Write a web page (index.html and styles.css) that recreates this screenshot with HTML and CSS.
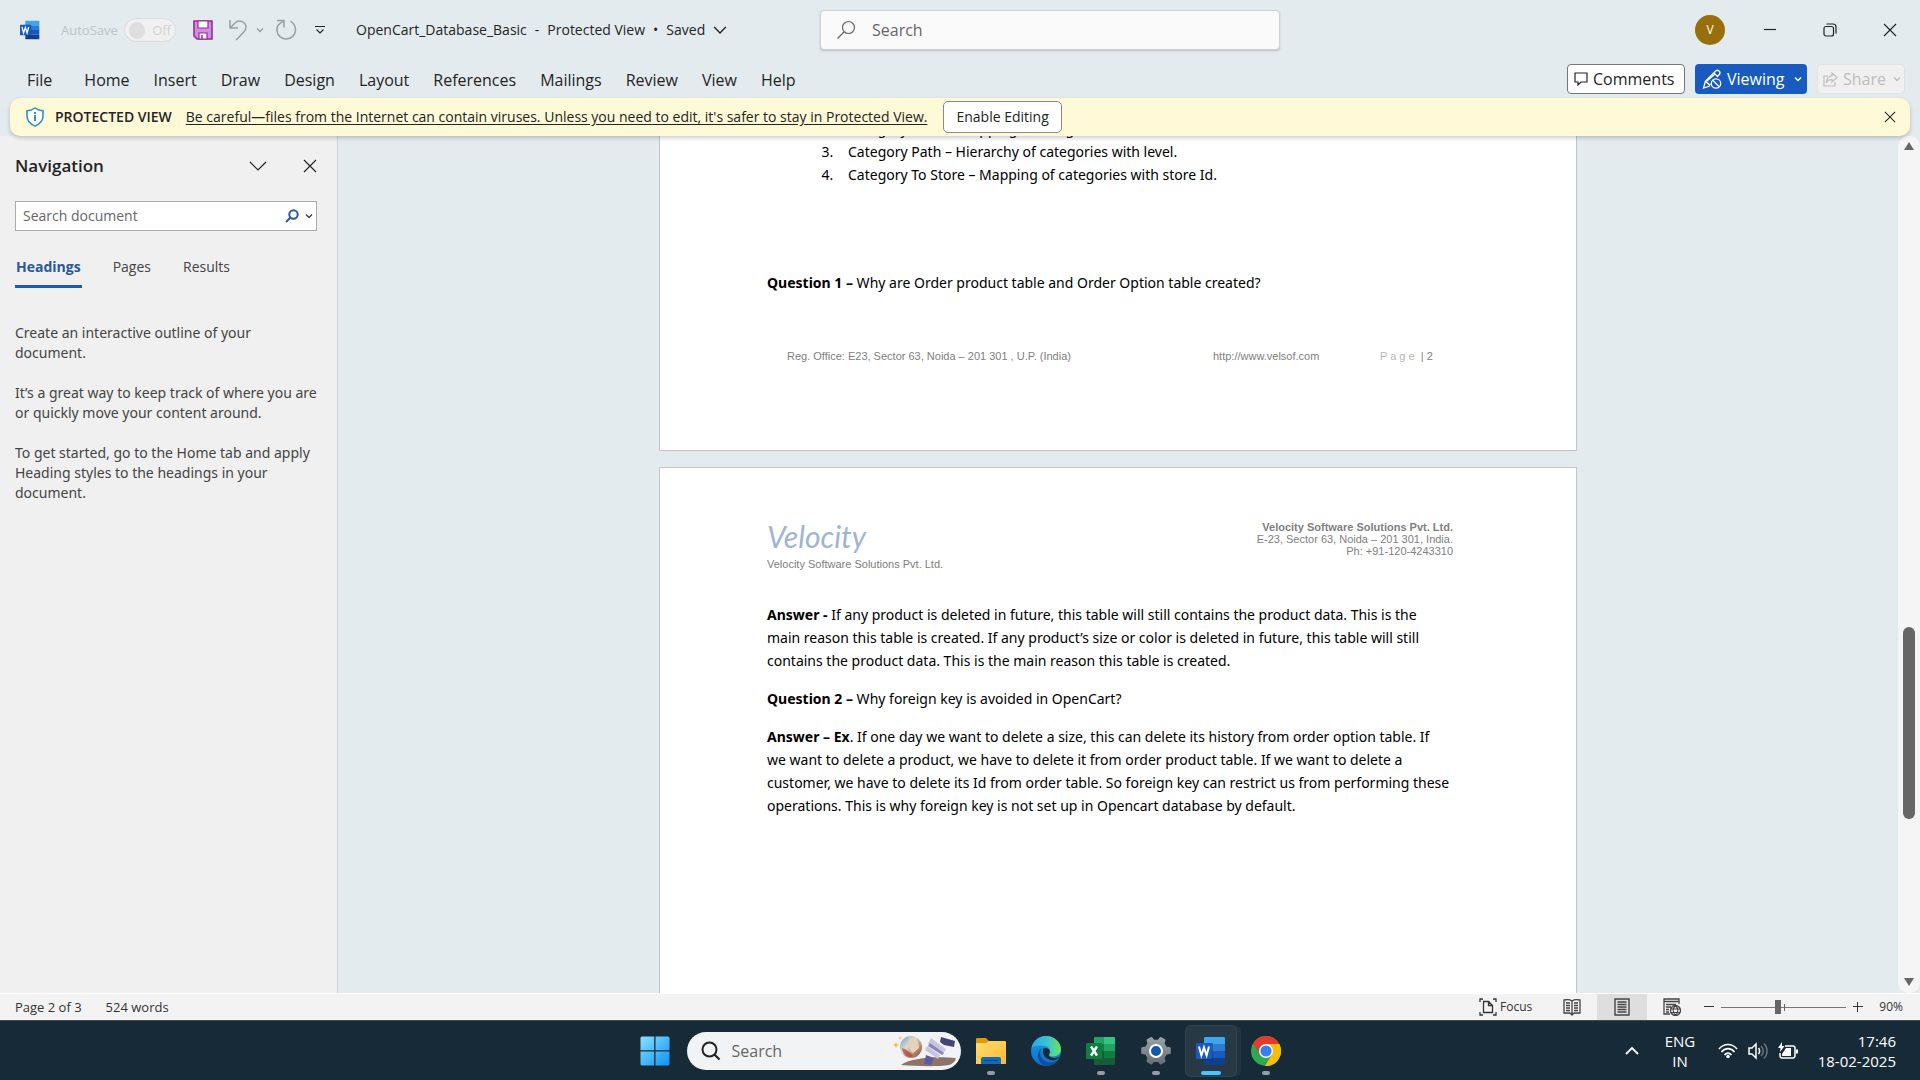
FILE: index.html
```html
<!DOCTYPE html>
<html lang="en">
<head>
<meta charset="utf-8">
<title>OpenCart_Database_Basic - Protected View</title>
<link rel="stylesheet" href="styles.css">
</head>
<body>
<svg class="defs" width="0" height="0" aria-hidden="true">
  <defs>
    <linearGradient id="win" x1="0" y1="0" x2="1" y2="1"><stop offset="0" stop-color="#8be0ff"/><stop offset="1" stop-color="#0a93f5"/></linearGradient>
    <linearGradient id="fold" x1="0" y1="0" x2="1" y2="1"><stop offset="0" stop-color="#ffdd76"/><stop offset="1" stop-color="#fdb92d"/></linearGradient>
    <linearGradient id="edgeTop" x1="0" y1="0" x2="1" y2="0"><stop offset="0" stop-color="#2aa7e6"/><stop offset=".5" stop-color="#35c3d8"/><stop offset="1" stop-color="#6be35a"/></linearGradient>
    <linearGradient id="edgeLeft" x1="0" y1="0" x2="0" y2="1"><stop offset="0" stop-color="#1b9fe4"/><stop offset="1" stop-color="#1069c8"/></linearGradient>
    <linearGradient id="ball" x1="0" y1="0" x2="1" y2="1"><stop offset="0" stop-color="#6f97b4"/><stop offset=".4" stop-color="#d9dcd5"/><stop offset=".7" stop-color="#c08766"/><stop offset="1" stop-color="#5a4a4a"/></linearGradient>
    <linearGradient id="gear" x1="0" y1="0" x2="0" y2="1"><stop offset="0" stop-color="#9aa0a8"/><stop offset="1" stop-color="#696f77"/></linearGradient>
    <symbol id="word" viewBox="0 0 30 30">
      <path fill="#41a5ee" d="M9 1h19a1 1 0 0 1 1 1v6H8V2a1 1 0 0 1 1-1z"/><path fill="#2b7cd3" d="M8 8h21v7H8z"/><path fill="#185abd" d="M8 15h21v7H8z"/><path fill="#103f91" d="M8 22h21v6a1 1 0 0 1-1 1H9a1 1 0 0 1-1-1z"/>
      <path fill="#0b2f6b" opacity=".4" d="M8 7h8a1 1 0 0 1 1 1v15a1 1 0 0 1-1 1H8z"/>
      <rect y="7" width="16" height="16" rx="1" fill="#185abd"/><path fill="none" stroke="#fff" stroke-width="2" d="M3 10.500l2.400 9L8 11.500l2.600 8 2.400-9"/>
    </symbol>
    <symbol id="excel" viewBox="0 0 30 30">
      <path fill="#21a366" d="M8 2a1 1 0 0 1 1-1h9v7H8z"/><path fill="#33c481" d="M18 1h10a1 1 0 0 1 1 1v6H18z"/><path fill="#107c41" d="M8 8h10v7H8zM18 15h11v7H18z"/><path fill="#21a366" d="M18 8h11v7H18z"/><path fill="#185c37" d="M8 15h10v7h11v6a1 1 0 0 1-1 1H9a1 1 0 0 1-1-1z"/>
      <rect y="7" width="16" height="16" rx="1" fill="#107c41"/><path fill="none" stroke="#fff" stroke-width="2.400" d="M5 10.500l6 9M11 10.500l-6 9"/>
    </symbol>
    <symbol id="chev" viewBox="0 0 12 12"><path fill="none" stroke="currentColor" stroke-width="1.200" d="M1 3.500l5 5 5-5"/></symbol>
    <symbol id="chevBold" viewBox="0 0 8 8"><path fill="none" stroke="currentColor" stroke-width="1.400" d="M1 2.500l3 3 3-3"/></symbol>
    <symbol id="close" viewBox="0 0 14 14"><path fill="none" stroke="currentColor" stroke-width="1.200" d="M1 1l12 12M13 1L1 13"/></symbol>
    <symbol id="lens" viewBox="0 0 20 20"><circle cx="12.500" cy="7.500" r="6" fill="none" stroke="currentColor" stroke-width="1.200"/><path fill="none" stroke="currentColor" stroke-width="1.200" d="M8 12l-6.500 6.500"/></symbol>
  </defs>
</svg>
<div class="app">
  <header class="titlebar">
    <div class="quick">
      <svg class="i22 word-logo"><use href="#word"/></svg>
      <span class="autosave">AutoSave</span>
      <button class="toggle" disabled><span class="knob"></span>Off</button>
      <button class="icon save" aria-label="Save"><svg width="20" height="20" viewBox="0 0 20 20"><path fill="#d78bdd" stroke="#8f2f9c" stroke-width="1.600" d="M1 1h18v18H4l-3-3z"/><path fill="#fff" stroke="#8f2f9c" stroke-width="1.200" d="M5 1h10v7H5zM6 13h8v6H6z"/><path stroke="#8f2f9c" stroke-width="1.500" d="M9 15v4"/></svg></button>
      <button class="icon muted undo" aria-label="Undo"><svg width="20" height="22" viewBox="0 0 20 22"><path fill="none" stroke="currentColor" stroke-width="1.500" d="M2 1v8h8M2 9l5-5c4-4 11-1 11 4 0 3-1 4-3 6l-7 7"/></svg></button>
      <button class="icon muted" aria-label="Undo options"><svg width="8" height="8"><use href="#chevBold"/></svg></button>
      <button class="icon muted redo" aria-label="Repeat"><svg width="22" height="22" viewBox="0 0 22 22"><path fill="none" stroke="currentColor" stroke-width="1.500" d="M2 1.500h7v7M9 2c-5 2-7.500 5.500-7 10 .5 5 5 8 9.500 8s9-4 9-9c0-4-2-7-5-9"/></svg></button>
      <button class="icon more" aria-label="Customize toolbar"><svg width="10" height="10" viewBox="0 0 10 10"><path fill="none" stroke="currentColor" stroke-width="1.200" d="M0 1.500h10M1.500 4.500L5 8l3.500-3.500"/></svg></button>
      <button class="doc-name"><span>OpenCart_Database_Basic</span><span>-</span><span>Protected View</span><span>•</span><span>Saved</span><svg width="14" height="14"><use href="#chev"/></svg></button>
    </div>
    <label class="search"><svg width="20" height="20"><use href="#lens"/></svg><input type="text" placeholder="Search" aria-label="Search"></label>
    <div class="window">
      <button class="avatar" aria-label="Account">V</button>
      <button class="icon" aria-label="Minimize"><svg width="14" height="14" viewBox="0 0 14 14"><path stroke="currentColor" stroke-width="1.200" d="M1 6.500h12"/></svg></button>
      <button class="icon" aria-label="Restore"><svg width="14" height="14" viewBox="0 0 14 14"><rect x="1" y="3.500" width="9.500" height="9.500" rx="2" fill="none" stroke="currentColor" stroke-width="1.200"/><path fill="none" stroke="currentColor" stroke-width="1.200" d="M3.500 1H10q3 0 3 3v6.500"/></svg></button>
      <button class="icon" aria-label="Close"><svg width="14" height="14"><use href="#close"/></svg></button>
    </div>
  </header>

  <div class="ribbon">
    <nav class="tabs">
      <a href="#" class="file">File</a><a href="#">Home</a><a href="#">Insert</a><a href="#">Draw</a><a href="#">Design</a><a href="#">Layout</a><a href="#">References</a><a href="#">Mailings</a><a href="#">Review</a><a href="#">View</a><a href="#">Help</a>
    </nav>
    <div class="actions">
      <button class="btn comments"><svg width="14" height="14" viewBox="0 0 14 14"><path fill="none" stroke="currentColor" stroke-width="1.200" d="M1 1h12v9H7l-3 3v-3H1z"/></svg>Comments</button>
      <button class="btn viewing"><svg width="20" height="20" viewBox="0 0 20 20"><g fill="none" stroke="currentColor" stroke-width="1.300"><path d="M8 17l-6.500 2L3.500 12 14 1.800c2-1.500 5 1 3.500 3.500L15 8M3.500 12l4 4 1-1M12 4l4 4M5 12l8-7"/><circle cx="14" cy="14.500" r="4.700"/><path d="M10.500 11l7 7"/></g></svg>Viewing<svg class="small" width="8" height="8"><use href="#chevBold"/></svg></button>
      <button class="btn share" disabled><svg width="15" height="15" viewBox="0 0 15 15"><path fill="none" stroke="currentColor" stroke-width="1.200" d="M5 4H1v10h11v-4M9 1l5 4.500L9 10V7.500C6 7.500 4 9 3.500 11 3.500 6.500 6 4 9 3.800z"/></svg>Share<svg class="small" width="8" height="8"><use href="#chevBold"/></svg></button>
    </div>
  </div>

  <div class="notice">
    <svg width="18" height="20" viewBox="0 0 18 20"><path fill="#fff" stroke="#2f8fd0" stroke-width="1.600" d="M9 1c2.500 2 5 2.600 8 2.700V9c0 5-3 8-8 10-5-2-8-5-8-10V3.700C4 3.600 6.500 3 9 1z"/><path fill="#2f8fd0" d="M8 5h2v2H8zM8 8h2v6H8z"/></svg>
    <strong>PROTECTED VIEW</strong>
    <a href="#">Be careful—files from the Internet can contain viruses. Unless you need to edit, it's safer to stay in Protected View.</a>
    <button class="enable">Enable Editing</button>
    <button class="icon dismiss" aria-label="Dismiss"><svg width="12" height="12"><use href="#close"/></svg></button>
  </div>

  <main class="workspace">
    <aside class="nav">
      <div class="nav-head"><h2>Navigation</h2>
        <button class="icon" aria-label="Pane options"><svg width="18" height="10" viewBox="0 0 18 10"><path fill="none" stroke="currentColor" stroke-width="1.200" d="M1 1l8 8 8-8"/></svg></button>
        <button class="icon" aria-label="Close pane"><svg width="14" height="14"><use href="#close"/></svg></button></div>
      <label class="nav-search"><input type="text" placeholder="Search document" aria-label="Search document"><svg class="find" width="14" height="14" viewBox="0 0 14 14"><circle cx="8.500" cy="5.500" r="4.200" fill="none" stroke="currentColor" stroke-width="2"/><path stroke="currentColor" stroke-width="2" d="M5.500 8.500L1 13"/></svg><svg width="8" height="8"><use href="#chevBold"/></svg></label>
      <div class="nav-tabs"><button class="on">Headings</button><button>Pages</button><button>Results</button></div>
      <div class="nav-help">
        <p>Create an interactive outline of your<br>document.</p>
        <p>It’s a great way to keep track of where you are<br>or quickly move your content around.</p>
        <p>To get started, go to the Home tab and apply<br>Heading styles to the headings in your<br>document.</p>
      </div>
    </aside>

    <div class="canvas">
      <article class="page first">
        <ol start="2">
          <li>Category Filter – Mapping of categories with filter.</li>
          <li>Category Path – Hierarchy of categories with level.</li>
          <li>Category To Store – Mapping of categories with store Id.</li>
        </ol>
        <p><b>Question 1 –</b> Why are Order product table and Order Option table created?</p>
        <footer><span class="office">Reg. Office: E23, Sector 63, Noida – 201 301 , U.P. (India)</span><span>http://www.velsof.com</span><span><span class="pale">P a g e</span>&nbsp; | 2</span></footer>
      </article>
      <article class="page second">
        <header>
          <div><div class="brand">Velocity</div><div>Velocity Software Solutions Pvt. Ltd.</div></div>
          <address><b>Velocity Software Solutions Pvt. Ltd.</b><br>E-23, Sector 63, Noida – 201 301, India.<br>Ph: +91-120-4243310</address>
        </header>
        <p><b>Answer -</b> If any product is deleted in future, this table will still contains the product data. This is the<br>main reason this table is created. If any product’s size or color is deleted in future, this table will still<br>contains the product data. This is the main reason this table is created.</p>
        <p><b>Question 2 –</b> Why foreign key is avoided in OpenCart?</p>
        <p><b>Answer – Ex</b>. If one day we want to delete a size, this can delete its history from order option table. If<br>we want to delete a product, we have to delete it from order product table. If we want to delete a<br>customer, we have to delete its Id from order table. So foreign key can restrict us from performing these<br>operations. This is why foreign key is not set up in Opencart database by default.</p>
      </article>
    </div>
    <div class="scroll"><svg width="12" height="10" viewBox="0 0 12 10"><path fill="#666" d="M6 1l5 8H1z"/></svg><div class="rail"><div class="thumb"></div></div><svg width="12" height="10" viewBox="0 0 12 10"><path fill="#666" d="M6 9l5-8H1z"/></svg></div>
  </main>

  <footer class="status">
    <span>Page 2 of 3</span><span class="words">524 words</span>
    <button class="focus"><svg width="18" height="18" viewBox="0 0 18 18"><g fill="none" stroke="#333" stroke-width="1.300"><path d="M1 4V1h3M14 1h3v3M1 14v3h3M14 17h3v-3"/><path d="M4.500 3.500h5l4 4v7h-9zM9.500 3.500v4h4"/></g></svg>Focus</button>
    <button class="mode" aria-label="Read mode"><svg width="18" height="18" viewBox="0 0 18 18"><path fill="none" stroke="#444" stroke-width="1.300" d="M9 3C7 1.500 4 1.500 1 2v13h6l2 2 2-2h6V2c-3-.5-6-.5-8 1zM9 3v13M3 5h4M3 7.500h4M3 10h4M3 12.500h4M11 5h4M11 7.500h4M11 10h4M11 12.500h4"/></svg></button>
    <button class="mode on" aria-label="Print layout"><svg width="16" height="18" viewBox="0 0 16 18"><path fill="none" stroke="#444" stroke-width="1.400" d="M1 1h14v16H1zM3.500 4h9M3.500 6.500h9M3.500 9h9M3.500 11.500h9M3.500 14h9"/></svg></button>
    <button class="mode" aria-label="Web layout"><svg width="18" height="18" viewBox="0 0 18 18"><path fill="none" stroke="#444" stroke-width="1.300" d="M7 16H1V1h15v5M1 3.500h15M3 6.500h10M3 9h5M3 11.500h3M3 14h3"/><circle cx="12.500" cy="12.500" r="5" fill="#f3f3f3" stroke="#444" stroke-width="1.300"/><path fill="none" stroke="#444" stroke-width="1.200" d="M12.500 7.500c-3 3-3 7 0 10 3-3 3-7 0-10zM8 11h9M8 14.500h9"/></svg></button>
    <button class="icon step" aria-label="Zoom out"><svg width="10" height="10" viewBox="0 0 10 10"><path stroke="currentColor" d="M0 4.500h10"/></svg></button>
    <span class="zoom"><input type="range" min="10" max="500" value="230" aria-label="Zoom"></span>
    <button class="icon step" aria-label="Zoom in"><svg width="10" height="10" viewBox="0 0 10 10"><path stroke="currentColor" d="M0 4.500h10M4.500 0v10"/></svg></button>
    <button class="percent">90%</button>
  </footer>
</div>

<div class="taskbar">
  <div class="dock">
    <button class="app-btn start" aria-label="Start"><svg width="30" height="30" viewBox="0 0 30 30"><path fill="url(#win)" d="M2 .5h12.200v13.700H.5V2A1.500 1.500 0 0 1 2 .5zM15.500.5H28A1.500 1.500 0 0 1 29.500 2v12.200h-14zM.5 15.500h13.700v14H2A1.500 1.500 0 0 1 .5 28zM15.500 15.500h14V28a1.500 1.500 0 0 1-1.500 1.500H15.500z"/></svg></button>
    <label class="task-search"><svg width="20" height="20" viewBox="0 0 20 20"><circle cx="8.500" cy="8.500" r="7" fill="none" stroke="#222" stroke-width="2"/><path stroke="#222" stroke-width="2.200" d="M13.500 13.500L18.500 18.500"/></svg><input type="text" placeholder="Search" aria-label="Search Windows">
      <svg width="64" height="32" viewBox="0 0 64 32"><path fill="#8c7468" d="M8 30c8-7 36-9 54-7 2 0 0 5-6 7-12 2-34 1-48 0z"/><circle cx="18" cy="12" r="11" fill="url(#ball)"/><path fill="#e3d3bd" d="M17 3c6-1 9 4 9 10l-6 5c-4-2-2-6-5-8z"/><path fill="#a8402c" d="M9 13c4 1 8 4 11 8-5 3-10-1-11-8z" opacity=".7"/><path fill="#c9c4e4" d="M38 3l15 11-3 5-15-10zM34 11l13 9-2 4-13-9z"/><path fill="#8d86b5" d="M37 8l14 10-2 2-14-9z"/><path fill="#454572" d="M48 2l14 4-1 6-10-2-4-3z"/><path fill="#5d5ba0" d="M33 20l8 3-3 7-7-1z"/><path fill="#f3c13a" d="M3 7l1 2 2 1-2 1-1 2-1-2-2-1 2-1zM7 1l.6 1.500L9 3l-1.400.6L7 5l-.6-1.400L5 3l1.400-.5z"/></svg></label>
    <button class="app-btn run" aria-label="File Explorer"><svg width="30" height="30" viewBox="0 0 30 30"><path fill="#dd9a08" d="M0 3a1 1 0 0 1 1-1h9l3 3h16v6H0z"/><path fill="url(#fold)" d="M0 7h10l3-2h16a1 1 0 0 1 1 1v22H0z"/><path fill="#0f6cbd" d="M5 28v-5a2 2 0 0 1 2-2h16a2 2 0 0 1 2 2v5z"/><path stroke="#0a4a8a" stroke-width="1.200" d="M8 24.500h14"/></svg></button>
    <button class="app-btn" aria-label="Edge"><svg width="30" height="30" viewBox="0 0 30 30"><circle cx="15" cy="15" r="15" fill="url(#edgeLeft)"/><path fill="url(#edgeTop)" d="M.5 11.500C2 5 8 0 15 0c9 0 15 7 15 13 0 5-4 7.500-8 7.500-4 0-5-1.500-4-3 2-3 0-7-4-7.500C8 8.500 3 10 .5 11.500z"/><path fill="#0d4f9e" d="M11 12c-4 5-1 12 5 14 4 1 8 0 11-2-3 4-7 6-12 6-5-1-9-7-8-12 .5-3 2-5 4-6z"/><path fill="#172a38" d="M12 13c2-2 6-1 7 2 .5 2-1 3-1 4 0 2 3 3 6 3 2 0 4-1 5-2-2 4-6 5-9 4-5-1-9-5-8-11z"/></svg></button>
    <button class="app-btn run" aria-label="Excel"><svg width="30" height="30"><use href="#excel"/></svg></button>
    <button class="app-btn run" aria-label="Settings"><svg width="30" height="30" viewBox="0 0 30 30"><path fill="url(#gear)" stroke="url(#gear)" stroke-width="2" stroke-linejoin="round" d="M10.500 2l2 2.700h5l2-2.700 4 2.200-1 3.300 2.500 4 3.800.8v4.700l-3.800.8-2.500 4 1 3.500-4 2.200-2-2.500h-5l-2 2.500-4-2.200 1-3.500-2.500-4-3.800-.8v-4.700l3.800-.8 2.500-4-1-3.300z"/><circle cx="15" cy="15" r="6" fill="#0f59a8" stroke="#fff" stroke-width="2"/></svg></button>
    <button class="app-btn run current" aria-label="Word"><svg width="30" height="30"><use href="#word"/></svg></button>
    <button class="app-btn run" aria-label="Chrome"><svg width="30" height="30" viewBox="0 0 30 30"><circle cx="15" cy="15" r="15" fill="#2da94f"/><path fill="#fbbc05" d="M15 8h13.300A15 15 0 0 1 14 30l7-11.500z"/><path fill="#e33b2e" d="M15 0a15 15 0 0 1 13.300 8H15a7 7 0 0 0-6.500 10L2 7.500A15 15 0 0 1 15 0z"/><circle cx="15" cy="15" r="7" fill="#fff"/><circle cx="15" cy="15" r="5.600" fill="#3b7ded"/></svg></button>
  </div>
  <div class="tray">
    <button class="icon" aria-label="Hidden icons"><svg width="14" height="10" viewBox="0 0 14 10"><path fill="none" stroke="currentColor" stroke-width="1.800" d="M1 8l6-6 6 6"/></svg></button>
    <button class="lang">ENG<br>IN</button>
    <button class="icon net" aria-label="Network, volume and battery">
      <svg width="20" height="16" viewBox="0 0 20 16"><g fill="none" stroke="currentColor" stroke-width="1.600"><path d="M1 6c5-6 13-6 18 0M3.500 9c3.500-4.500 9.500-4.500 13 0M6.500 12c2-2.500 5-2.500 7 0"/></g><circle cx="10" cy="13.500" r="1.800" fill="currentColor"/></svg>
      <svg width="20" height="18" viewBox="0 0 20 18"><path fill="none" stroke="currentColor" stroke-width="1.500" d="M1 6h3l4-4v14l-4-4H1zM10.500 6c1.500 2 1.500 4 0 6"/><path fill="none" stroke="currentColor" stroke-width="1.500" opacity=".35" d="M13 4c3 3 3 7 0 10M16 1.500c4 4 4 11 0 15"/></svg>
      <svg width="20" height="18" viewBox="0 0 20 18"><path fill="none" stroke="currentColor" stroke-width="1.500" d="M7 4h8q2 0 2 2v7q0 3-2 3H4q-2 0-2-3v-2"/><path fill="currentColor" d="M18 7.500h2v4h-2zM8 6h5v8H4v-2zM4 0l-4 6h2.500L2 10l4.500-6H4z"/></svg>
    </button>
    <button class="clock">17:46<br>18-02-2025</button>
  </div>
</div>
</body>
</html>
```
FILE: styles.css
```css
* { box-sizing: border-box; }
html, body { height: 100%; margin: 0; }
body {
  display: flex; flex-direction: column; overflow: hidden;
  background: #e3ebee; color: #242424;
  font: 14px/20px "Open Sans", "Noto Sans", sans-serif;
}
.defs { position: absolute; }
button, input { font: inherit; color: inherit; }
button { border: 0; background: none; padding: 0; white-space: nowrap; }
input { min-width: 0; border: 0; outline: 0; background: none; padding: 0; }
input::placeholder { color: #666; opacity: 1; }
svg { flex: none; display: block; }
p, h2, ol { margin: 0; padding: 0; }
.icon { display: flex; align-items: center; justify-content: center; }
.muted { color: #9a9fa2; }
.app { flex: 1; min-height: 0; display: flex; flex-direction: column; }

/* Title bar */
.titlebar { display: grid; grid-template-columns: 41fr 23fr 32fr; align-items: center; height: 60px; }
.quick { display: flex; align-items: center; padding-left: 20px; min-width: 0; }
.i22 { width: 20px; height: 20px; }
.autosave { width: 63px; margin-left: 21px; font-size: 13px; color: #bfc3c5; }
.toggle { display: flex; align-items: center; gap: 7px; width: 52px; height: 24px; padding: 0 4px; border: 1px solid #dcdcdc; border-radius: 12px; background: #f0f0f0; color: #d3d3d3; font-size: 13px; }
.knob { width: 17px; height: 17px; border-radius: 50%; background: #dedede; }
.save { margin-left: 17px; }
.undo { margin: 0 8px 0 15px; }
.redo { margin-left: 11px; }
.more { margin-left: 18px; }
.doc-name { display: flex; align-items: center; gap: 8px; margin-left: 31px; }
.search { display: flex; align-items: center; gap: 16px; height: 40px; padding: 0 15px; border: 1px solid #cdd1d3; border-radius: 4px; background: #fafafa; color: #666; font-size: 16px; box-shadow: 0 1px 2px #0003; }
.search input { flex: 1; }
.window { display: flex; align-items: center; justify-content: flex-end; gap: 46px; padding-right: 23px; }
.avatar { width: 30px; height: 30px; margin-right: -8px; border-radius: 50%; background: #986f0b; color: #fff; font-size: 12px; }

/* Ribbon */
.ribbon { display: flex; align-items: center; justify-content: space-between; height: 38px; padding: 0 15px 0 27px; }
.tabs { display: flex; gap: 24px; padding-top: 2px; font-size: 16px; }
.tabs a { color: inherit; text-decoration: none; }
.tabs .file { margin-right: 8px; }
.actions { display: flex; gap: 10px; font-size: 16px; }
.btn { display: flex; align-items: center; gap: 5px; height: 30px; padding: 0 6px; border: 1px solid transparent; border-radius: 4px; }
.comments { width: 118px; border-color: #777; background: #fff; }
.viewing { width: 112px; padding: 0 4px 0 6px; background: #185abd; color: #fff; }
.share { width: 88px; padding: 0 3px 0 5px; border-color: #e2e2e2; background: #f0f0f0; color: #bdbdbd; }
.btn .small { margin-left: auto; }

/* Protected view bar */
.notice { position: relative; z-index: 1; display: flex; align-items: center; height: 38px; margin: 0 10px; padding: 0 14px 0 16px; border-radius: 10px; background: #fef9d7; box-shadow: 0 2px 4px #0003; white-space: nowrap; }
.notice strong { margin: 0 14px 0 11px; font-weight: 600; }
.notice a { color: inherit; text-underline-offset: 2px; }
.enable { height: 32px; margin-left: 16px; padding: 0 12px; border: 1px solid #8a8a8a; border-radius: 5px; background: #fff; }
.dismiss { margin-left: auto; }

/* Workspace */
.workspace { flex: 1; min-height: 0; display: grid; grid-template-columns: 338px 1fr 22px; }
.nav { padding: 18px 18px 0 15px; border-right: 1px solid #cdd1d3; background: #f0f0f0; color: #444; white-space: nowrap; }
.nav-head { display: flex; align-items: center; gap: 36px; height: 24px; padding-right: 2px; color: #242424; }
.nav-head h2 { flex: 1; font-size: 17px; font-weight: 600; }
.nav-search { display: flex; align-items: center; gap: 6px; height: 30px; margin: 23px 2px 0 0; padding: 0 3px 0 7px; border: 1px solid #ababab; background: #fff; }
.nav-search input { flex: 1; }
.find { color: #2b579a; }
.nav-tabs { display: flex; gap: 30px; margin-top: 22px; }
.nav-tabs button { height: 35px; padding: 0 1px 4px; border-bottom: 3px solid transparent; }
.nav-tabs .on { border-color: #185abd; color: #2b579a; font-weight: 700; }
.nav-help { display: flex; flex-direction: column; gap: 20px; margin-top: 35px; font-family: "Noto Sans", "Open Sans", sans-serif; }

.canvas { display: flex; flex-direction: column; align-items: center; gap: 16px; overflow: hidden; }
.page { flex: none; width: 918px; border: 1px solid #c3c6c8; background: #fff; color: #000; padding: 0 107px; font: 14px/23px "Noto Sans", "Open Sans", sans-serif; white-space: nowrap; }
.first { height: 315px; border-top: 0; overflow: hidden; }
.first ol { margin-top: -19px; padding-left: 70px; }
.first li { padding-left: 11px; }
.first p { margin-top: 85px; }
.first footer { display: flex; margin: 56px 0 0 20px; }
.office { width: 426px; }
.first footer > span:nth-child(2) { width: 167px; }
.first footer, .second header { color: #808080; font: 11px/12px "Liberation Sans", sans-serif; }
.pale { color: #b5b5b5; }
.second { height: 1188px; display: flex; flex-direction: column; gap: 15px; padding-top: 50px; }
.second header { display: flex; justify-content: space-between; height: 70px; margin-right: 16px; }
.second address { padding-top: 3px; font-style: normal; text-align: right; }
.brand { padding-bottom: 4px; color: #a0b4d4; font: italic 30px/36px Lato, sans-serif; }

.scroll { display: flex; flex-direction: column; align-items: center; padding: 5px 0 6px; border-radius: 10px; background: #f5f5f5; }
.rail { flex: 1; width: 12px; display: flex; flex-direction: column; justify-content: flex-end; padding-bottom: 158px; }
.thumb { height: 23%; min-height: 192px; border-radius: 6px; background: #666; }

/* Status bar */
.status { display: flex; align-items: center; height: 27px; padding: 0 17px 0 15px; border-top: 1px solid #fff; background: #f3f3f3; font-size: 12px; color: #333; }
.status > span { font-size: 13px; }
.words { margin-left: 24px; }
.focus { display: flex; align-items: center; gap: 3px; margin: 0 15px 0 auto; }
.mode { display: flex; align-items: center; justify-content: center; width: 50px; height: 26px; }
.mode.on { background: #dedede; }
.step { margin-left: 7px; }
.zoom { position: relative; width: 125px; margin-left: 7px; }
.zoom::after { content: ""; position: absolute; left: 50%; top: 7px; width: 1px; height: 7px; background: #666; }
.zoom input { display: block; width: 100%; height: 20px; margin: 0; appearance: none; }
.zoom input::-webkit-slider-runnable-track { height: 1px; background: #777; }
.zoom input::-webkit-slider-thumb { appearance: none; width: 6px; height: 14px; margin-top: -7px; background: #666; }
.percent { margin-left: 16px; }

/* Taskbar */
.taskbar { display: grid; grid-template-columns: 1fr auto 1fr; align-items: center; height: 60px; border-top: 1px solid #3c4d59; background: #172a38; color: #fff; }
.dock { grid-column: 2; display: flex; align-items: center; gap: 5px; }
.app-btn { position: relative; display: flex; align-items: center; justify-content: center; width: 50px; height: 50px; border-radius: 5px; }
.run::after { content: ""; position: absolute; left: 21px; bottom: 1px; width: 8px; height: 4px; border-radius: 2px; background: #959ca3; }
.current { background: #273945; box-shadow: 0 0 0 1px #33444f, 5px 0 0 #21333f; }
.current::after { left: 15px; width: 20px; background: #4cc2ff; }
.task-search { display: flex; align-items: center; width: 274px; height: 38px; margin-left: 2px; padding: 0 4px 0 14px; border-radius: 19px; background: #f2f3f5; color: #444; font-size: 16px; }
.task-search input { flex: 1; margin-left: 11px; }
.tray { display: flex; align-items: center; justify-content: flex-end; padding-right: 24px; font-size: 15px; text-align: center; }
.lang { width: 60px; margin: 0 8px 0 11px; }
.net { gap: 10px; }
.clock { width: 98px; text-align: right; }
```
